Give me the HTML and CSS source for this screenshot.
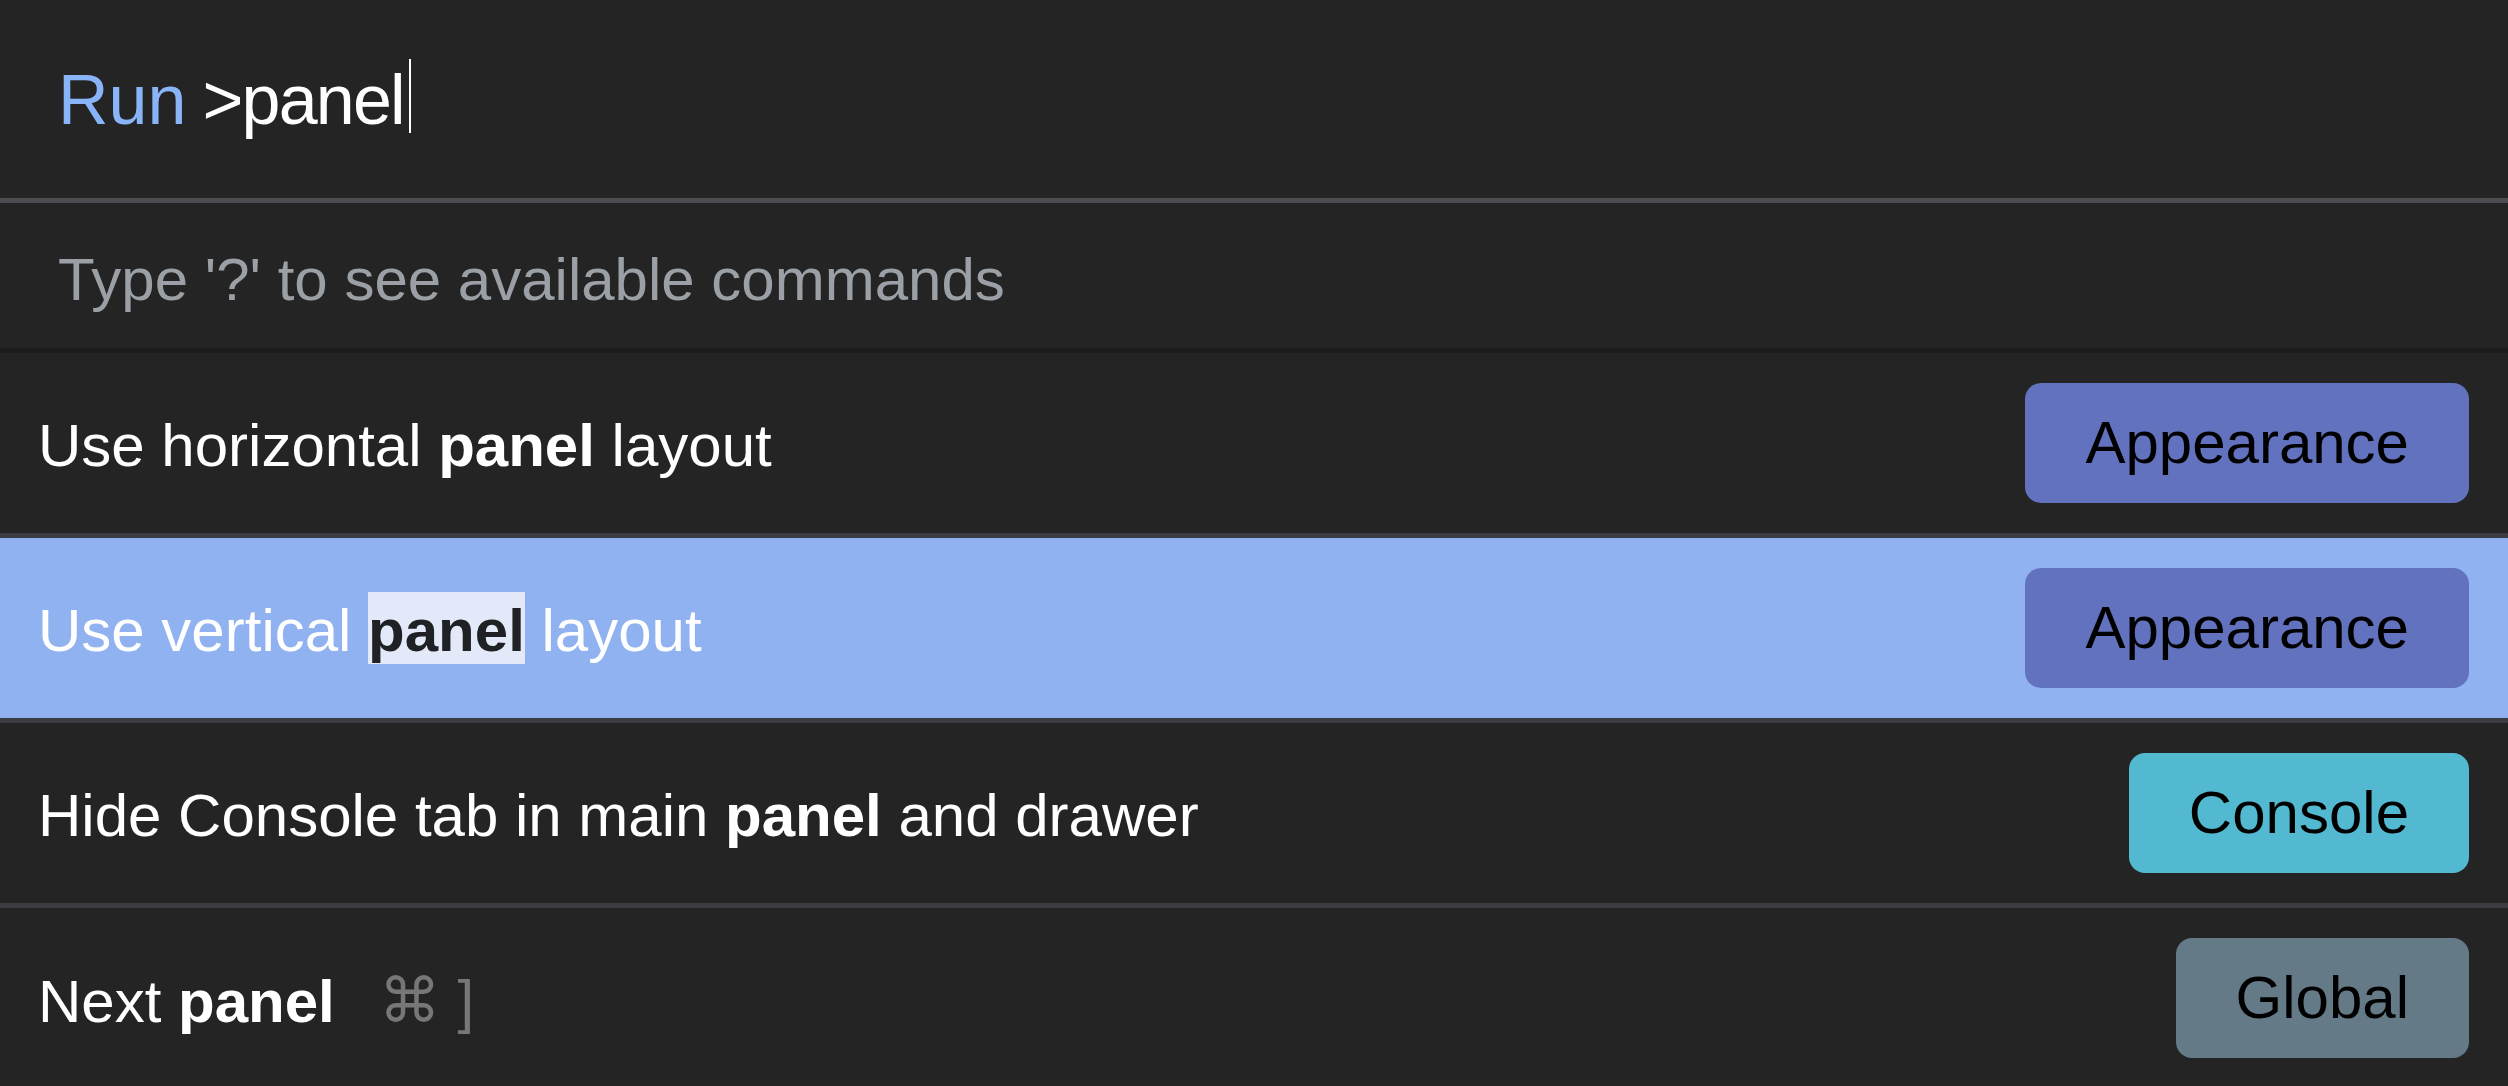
FILE: index.html
```html
<!DOCTYPE html>
<html lang="en">
<head>
<meta charset="utf-8">
<title>Command Menu</title>
<link rel="stylesheet" href="styles.css">
</head>
<body>
<div class="palette">
  <div class="prompt">
    <div class="prompt-line"><span class="prompt-label">Run</span><span class="prompt-input">&gt;panel</span><span class="caret"></span></div>
  </div>
  <div class="hint"><span class="hint-text">Type '?' to see available commands</span></div>
  <div class="list">
    <div class="item">
      <span class="label">Use horizontal <b>panel</b> layout</span>
      <span class="badge badge-appearance">Appearance</span>
    </div>
    <div class="item selected">
      <span class="label">Use vertical <b class="match">panel</b> layout</span>
      <span class="badge badge-appearance">Appearance</span>
    </div>
    <div class="item">
      <span class="label">Hide Console tab in main <b>panel</b> and drawer</span>
      <span class="badge badge-console">Console</span>
    </div>
    <div class="item">
      <span class="label">Next <b>panel</b><span class="shortcut"><span class="cmd">⌘</span> ]</span></span>
      <span class="badge badge-global">Global</span>
    </div>
  </div>
</div>
</body>
</html>
```
FILE: styles.css
```css
html, body {
  margin: 0;
  padding: 0;
  background: #242424;
}

body {
  font-family: "Liberation Sans", Arial, Helvetica, sans-serif;
  color: #ffffff;
  width: 2508px;
  height: 1086px;
  overflow: hidden;
}

.palette {
  display: flex;
  flex-direction: column;
}

.prompt {
  height: 198px;
  display: flex;
  align-items: center;
  padding-left: 58px;
  border-bottom: 5px solid #4b4d51;
}

.prompt-line {
  font-size: 70px;
  line-height: 80px;
  white-space: nowrap;
}

.prompt-label {
  color: #8ab4f8;
  margin-right: 16px;
}

.prompt-input {
  color: #ffffff;
  letter-spacing: -1.8px;
}

.caret {
  display: inline-block;
  width: 2px;
  height: 74px;
  background: #ffffff;
  margin-left: 5px;
  vertical-align: -9px;
}

.hint {
  height: 145px;
  display: flex;
  align-items: center;
  padding-left: 58px;
  border-bottom: 5px solid #1c1c1c;
}

.hint-text {
  font-size: 60px;
  color: #9aa0a6;
  padding-top: 7px;
  white-space: nowrap;
}

.list {
  display: flex;
  flex-direction: column;
}

.item {
  height: 180px;
  flex: none;
  display: flex;
  align-items: center;
  justify-content: space-between;
  padding: 0 39px 0 38px;
  border-bottom: 5px solid #3c3d40;
}

.item.selected {
  background: #90b2f0;
}

.label {
  font-size: 60px;
  padding-top: 4px;
  white-space: nowrap;
  color: #ffffff;
}

.label b {
  font-weight: 700;
}

.match {
  background: #e3e9f9;
  color: #202124;
  padding-top: 5px;
  padding-bottom: 0;
}

.shortcut {
  color: #777777;
  margin-left: 44px;
  font-weight: 400;
}

.cmd {
  font-family: "DejaVu Sans", sans-serif;
  font-size: 62px;
}

.badge {
  height: 120px;
  line-height: 120px;
  padding: 0 60px;
  border-radius: 16px;
  font-size: 60px;
  color: #000000;
  white-space: nowrap;
}

.badge-appearance {
  background: #6372bf;
}

.badge-console {
  background: #53b9d0;
}

.badge-global {
  background: #647a87;
}
```
